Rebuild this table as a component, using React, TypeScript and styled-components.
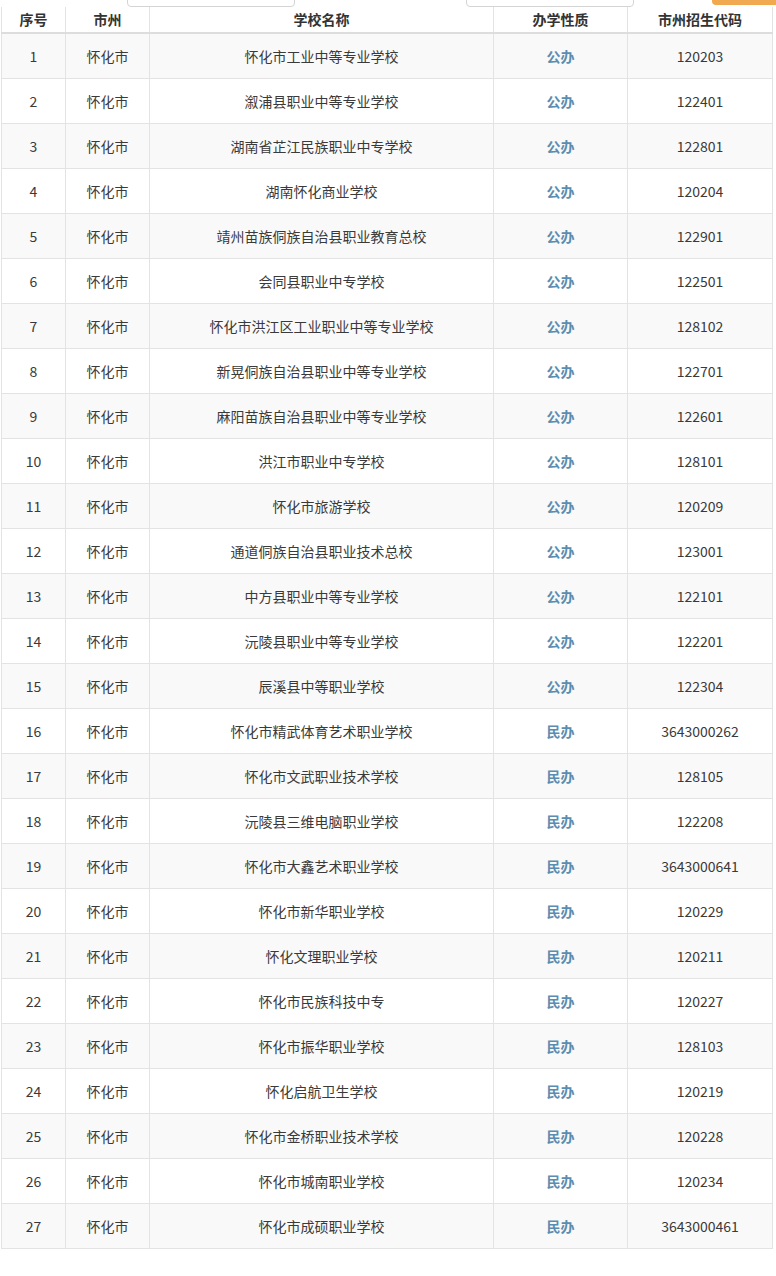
import React from 'react';
import styled, { createGlobalStyle } from 'styled-components';

const GlobalStyle = createGlobalStyle`
  html, body {
    margin: 0;
    padding: 0;
    background: #ffffff;
  }
  body {
    font-family: "Microsoft YaHei", "Noto Sans CJK SC", "Noto Sans", sans-serif;
    color: #333333;
  }
`;

const Page = styled.div`
  width: 776px;
  overflow: hidden;
`;

const Toolbar = styled.div`
  height: 7px;
  position: relative;
  overflow: hidden;
`;

const SearchBox = styled.div<{ left: number; width: number }>`
  position: absolute;
  bottom: 0;
  left: ${p => p.left}px;
  width: ${p => p.width}px;
  height: 20px;
  box-sizing: border-box;
  background: #ffffff;
  border: 1px solid #d4d4d4;
  border-radius: 4px;
`;

const OrangeButton = styled.div`
  position: absolute;
  bottom: 2px;
  left: 712px;
  width: 80px;
  height: 20px;
  background: #f0a94e;
  border-radius: 4px;
`;

const Table = styled.table`
  margin-left: 1px;
  width: 772px;
  border-collapse: collapse;
  table-layout: fixed;
  font-size: 14px;
`;

const HeadCell = styled.th<{ w?: number }>`
  width: ${p => (p.w ? `${p.w}px` : 'auto')};
  height: 25px;
  padding: 0;
  font-weight: 700;
  color: #333333;
  text-align: center;
  border-left: 1px solid #e3e3e3;
  border-right: 1px solid #e3e3e3;
  border-bottom: 2px solid #dddddd;
  background: #ffffff;
  line-height: 25px;
`;

const Row = styled.tr<{ striped: boolean }>`
  background: ${p => (p.striped ? '#f9f9f9' : '#ffffff')};
`;

const Cell = styled.td`
  height: 44px;
  padding: 0;
  text-align: center;
  color: #3a3a3a;
  border: 1px solid #e3e3e3;
  white-space: nowrap;
`;

const TypeCell = styled(Cell)`
  color: #5a8db0;
  font-weight: 700;
`;

type School = [string, string, string];

const schools: School[] = [
  ['怀化市工业中等专业学校', '公办', '120203'],
  ['溆浦县职业中等专业学校', '公办', '122401'],
  ['湖南省芷江民族职业中专学校', '公办', '122801'],
  ['湖南怀化商业学校', '公办', '120204'],
  ['靖州苗族侗族自治县职业教育总校', '公办', '122901'],
  ['会同县职业中专学校', '公办', '122501'],
  ['怀化市洪江区工业职业中等专业学校', '公办', '128102'],
  ['新晃侗族自治县职业中等专业学校', '公办', '122701'],
  ['麻阳苗族自治县职业中等专业学校', '公办', '122601'],
  ['洪江市职业中专学校', '公办', '128101'],
  ['怀化市旅游学校', '公办', '120209'],
  ['通道侗族自治县职业技术总校', '公办', '123001'],
  ['中方县职业中等专业学校', '公办', '122101'],
  ['沅陵县职业中等专业学校', '公办', '122201'],
  ['辰溪县中等职业学校', '公办', '122304'],
  ['怀化市精武体育艺术职业学校', '民办', '3643000262'],
  ['怀化市文武职业技术学校', '民办', '128105'],
  ['沅陵县三维电脑职业学校', '民办', '122208'],
  ['怀化市大鑫艺术职业学校', '民办', '3643000641'],
  ['怀化市新华职业学校', '民办', '120229'],
  ['怀化文理职业学校', '民办', '120211'],
  ['怀化市民族科技中专', '民办', '120227'],
  ['怀化市振华职业学校', '民办', '128103'],
  ['怀化启航卫生学校', '民办', '120219'],
  ['怀化市金桥职业技术学校', '民办', '120228'],
  ['怀化市城南职业学校', '民办', '120234'],
  ['怀化市成硕职业学校', '民办', '3643000461'],
];

const columns: [string, number | undefined][] = [
  ['序号', 63],
  ['市州', 83],
  ['学校名称', 343],
  ['办学性质', 133],
  ['市州招生代码', undefined],
];

const App: React.FC = () => {
  return (
    <Page>
      <GlobalStyle />
      <Toolbar>
        <SearchBox left={127} width={168} />
        <SearchBox left={466} width={168} />
        <OrangeButton />
      </Toolbar>
      <Table>
        <thead>
          <tr>
            {columns.map(([title, w]) => (
              <HeadCell key={title} w={w}>
                {title}
              </HeadCell>
            ))}
          </tr>
        </thead>
        <tbody>
          {schools.map(([name, type, code], i) => (
            <Row key={code + i} striped={i % 2 === 0}>
              <Cell>{i + 1}</Cell>
              <Cell>怀化市</Cell>
              <Cell>{name}</Cell>
              <TypeCell>{type}</TypeCell>
              <Cell>{code}</Cell>
            </Row>
          ))}
        </tbody>
      </Table>
    </Page>
  );
};

export default App;
